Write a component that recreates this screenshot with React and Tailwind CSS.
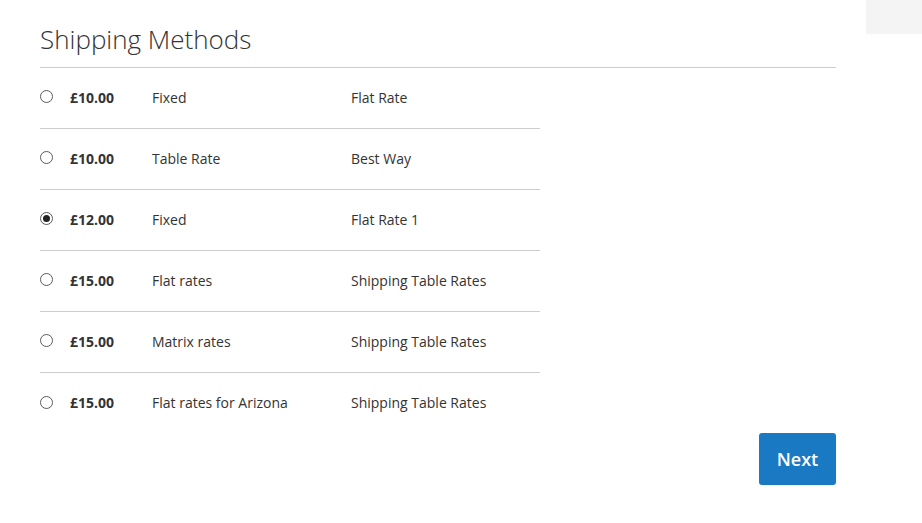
import React from 'react';

const rates = [
  { price: '£10.00', method: 'Fixed', carrier: 'Flat Rate' },
  { price: '£10.00', method: 'Table Rate', carrier: 'Best Way' },
  { price: '£12.00', method: 'Fixed', carrier: 'Flat Rate 1', checked: true },
  { price: '£15.00', method: 'Flat rates', carrier: 'Shipping Table Rates' },
  { price: '£15.00', method: 'Matrix rates', carrier: 'Shipping Table Rates' },
  { price: '£15.00', method: 'Flat rates for Arizona', carrier: 'Shipping Table Rates' },
];

const Radio = ({ checked }) => (
  <span className="flex h-[13px] w-[13px] items-center justify-center rounded-full border border-[#5a5a5a] bg-white">
    {checked && <span className="h-[7px] w-[7px] rounded-full bg-[#222]" />}
  </span>
);

export default function App() {
  return (
    <div
      className="flex min-h-[523px] bg-white text-[#333]"
      style={{ fontFamily: '"Open Sans", "Liberation Sans", sans-serif' }}
    >
      <div className="w-[836px] pl-[40px]">
        {/* Title */}
        <div className="border-b border-[#ccc] pt-[24px] pb-[12px] text-[26px] font-light leading-[1.2]">
          Shipping Methods
        </div>

        {/* Rates table */}
        <div className="w-[500px]">
          {rates.map((r, i) => (
            <div
              key={i}
              className={
                'flex h-[61px] items-center pb-[2px] text-[14px] ' +
                (i < rates.length - 1 ? 'border-b border-[#ccc]' : '')
              }
            >
              <div className="w-[30px] pb-[1px]">
                <Radio checked={r.checked} />
              </div>
              <div className="w-[82px] font-bold">{r.price}</div>
              <div className="w-[199px]">{r.method}</div>
              <div>{r.carrier}</div>
            </div>
          ))}
        </div>

        {/* Actions */}
        <div className="-mt-[1px] flex justify-end">
          <button className="h-[52px] w-[77px] rounded-[3px] bg-[#1979c3] text-[18px] font-semibold leading-[22px] text-white">
            Next
          </button>
        </div>
      </div>

      <div className="ml-[30px] h-[34px] w-[56px] bg-[#f4f4f4]" />
    </div>
  );
}
